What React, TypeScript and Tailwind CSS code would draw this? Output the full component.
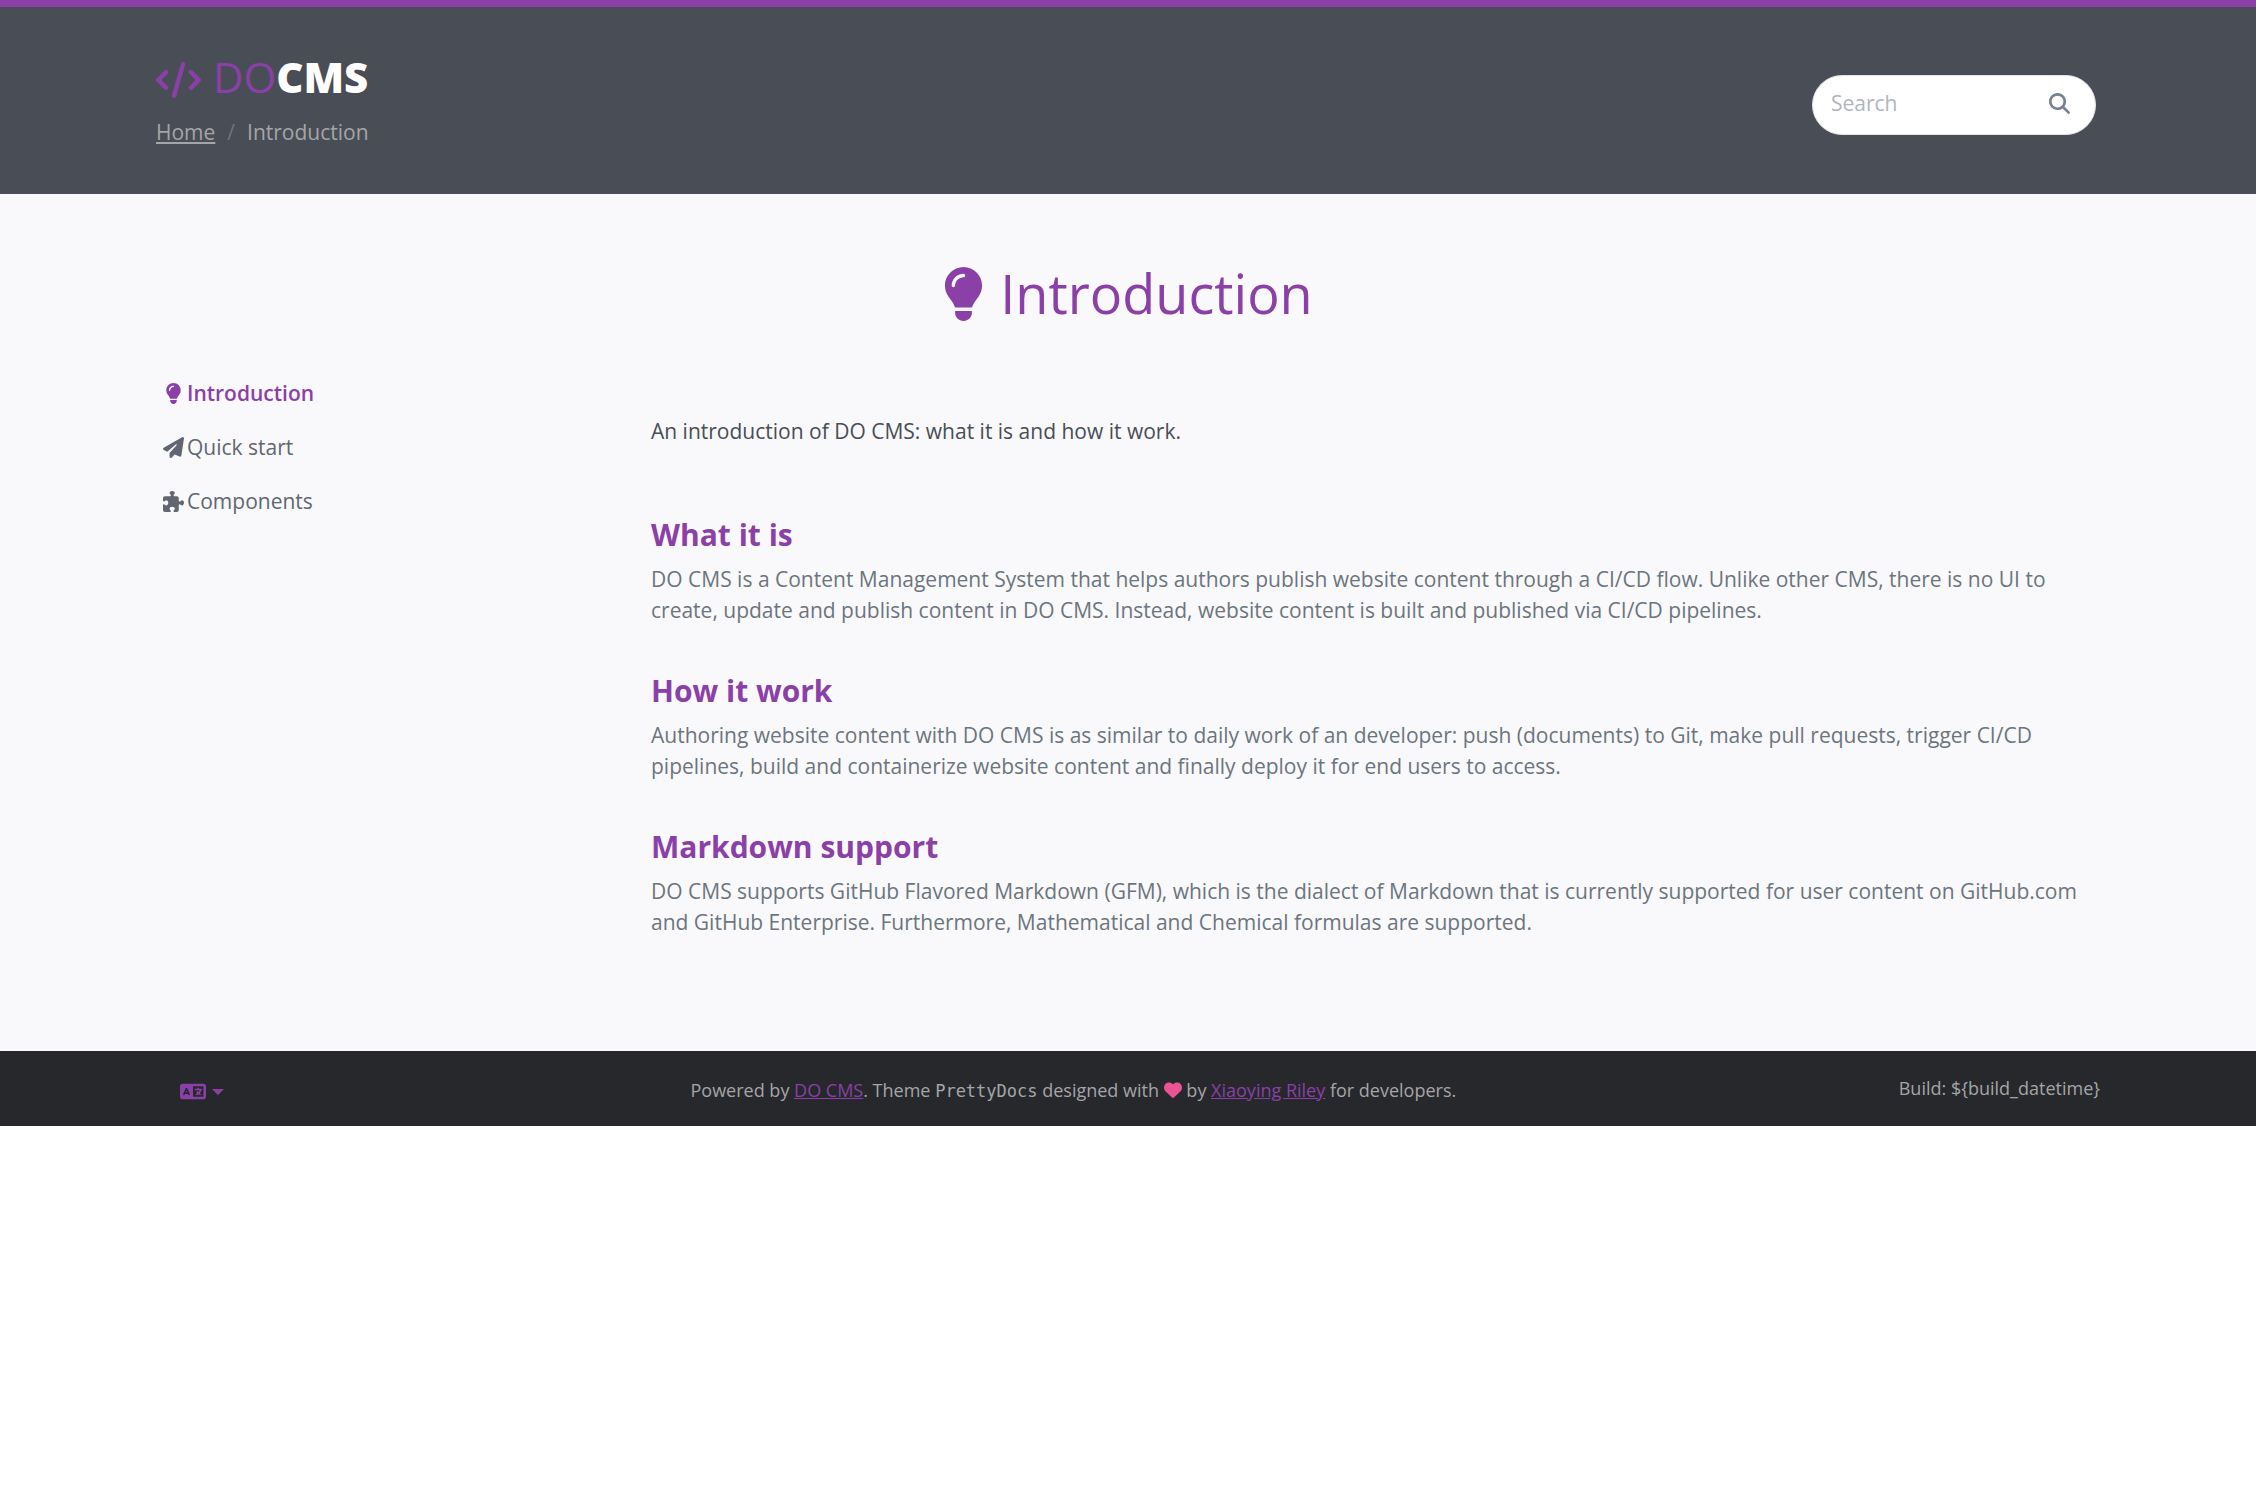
import {
  FaCode,
  FaHeart,
  FaLanguage,
  FaLightbulb,
  FaMagnifyingGlass,
  FaPaperPlane,
  FaPuzzlePiece,
} from "react-icons/fa6";

const links = [
  { label: "Introduction", Icon: FaLightbulb, active: true },
  { label: "Quick start", Icon: FaPaperPlane, active: false },
  { label: "Components", Icon: FaPuzzlePiece, active: false },
];

const sections = [
  {
    title: "What it is",
    text: "DO CMS is a Content Management System that helps authors publish website content through a CI/CD flow. Unlike other CMS, there is no UI to create, update and publish content in DO CMS. Instead, website content is built and published via CI/CD pipelines.",
  },
  {
    title: "How it work",
    text: "Authoring website content with DO CMS is as similar to daily work of an developer: push (documents) to Git, make pull requests, trigger CI/CD pipelines, build and containerize website content and finally deploy it for end users to access.",
  },
  {
    title: "Markdown support",
    text: "DO CMS supports GitHub Flavored Markdown (GFM), which is the dialect of Markdown that is currently supported for user content on GitHub.com and GitHub Enterprise. Furthermore, Mathematical and Chemical formulas are supported.",
  },
];

function Header() {
  return (
    <header className="border-t-[7px] border-[#8a40a7] bg-[#494d55]">
      <div className="mx-auto flex max-w-[1980px] items-start justify-between px-[18px] pt-[45px] pb-[46px]">
        <div>
          <a href="#" className="flex items-center text-[42px] leading-[50px] text-[#8a40a7]">
            <FaCode className="mt-1.5 mr-3 h-9 w-[45px]" />
            <span>DO</span>
            <span className="font-extrabold text-white">CMS</span>
          </a>
          <nav aria-label="Breadcrumb" className="mt-[15px]">
            <ol className="flex gap-3 text-[21px] leading-[31px] text-[#a5a5a7]">
              <li>
                <a href="#" className="underline">Home</a>
              </li>
              <li aria-hidden="true" className="text-[#6c757d]">/</li>
              <li aria-current="page">Introduction</li>
            </ol>
          </nav>
        </div>
        <form
          role="search"
          onSubmit={(e) => e.preventDefault()}
          className="mt-[23px] mr-1 flex h-[60px] w-[284px] items-center rounded-full border border-[#e2e3e6] bg-white pb-1 pl-[18px] pr-[25px]"
        >
          <input
            type="text"
            aria-label="Search"
            placeholder="Search"
            className="min-w-0 flex-1 bg-transparent text-[21px] leading-[31px] outline-none placeholder:text-[#b0b5be]"
          />
          <button type="submit" aria-label="Search" className="text-[#778090]">
            <FaMagnifyingGlass className="size-[21px]" />
          </button>
        </form>
      </div>
    </header>
  );
}

function Sidebar() {
  return (
    <nav aria-label="Documentation" className="w-1/4 shrink-0">
      <ul>
        {links.map(({ label, Icon, active }) => (
          <li key={label}>
            <a
              href="#"
              className={
                active
                  ? "flex h-[54px] items-center pl-[7px] font-semibold text-[#8a40a7]"
                  : "flex h-[54px] items-center pl-[7px] text-[#616670]"
              }
            >
              <span className="mr-[3px] flex w-[21px] justify-center">
                <Icon className="size-[21px]" />
              </span>
              {label}
            </a>
          </li>
        ))}
      </ul>
    </nav>
  );
}

function Footer() {
  return (
    <footer className="bg-[#26282c] text-[18px] leading-[27px] text-[#a5a5a7]">
      <div className="mx-auto flex h-[75px] max-w-[1980px] items-center justify-between px-[18px] pt-1">
        <button type="button" aria-label="Language" className="flex items-center gap-1.5 px-6 pt-0.5 text-[#8a40a7]">
          <FaLanguage className="h-[21px] w-[26px]" />
          <svg viewBox="0 0 12 6" className="h-1.5 w-3" fill="currentColor" aria-hidden="true">
            <path d="M0 0h12L6 6z" />
          </svg>
        </button>
        <p>
          Powered by <a href="#" className="text-[#8a40a7] underline">DO CMS</a>. Theme{" "}
          <code className="font-['DejaVu_Sans_Mono',monospace] text-[17px]">PrettyDocs</code> designed with{" "}
          <FaHeart className="inline size-[18px] align-[-2px] text-[#ea5395]" /> by{" "}
          <a href="#" className="text-[#8a40a7] underline">Xiaoying Riley</a> for developers.
        </p>
        <p className="pb-1">{"Build: ${build_datetime}"}</p>
      </div>
    </footer>
  );
}

export default function App() {
  return (
    <div className="font-['Open_Sans',sans-serif] text-[21px] leading-[31px]">
      <Header />
      <main className="bg-[#f9f9fb]">
        <div className="mx-auto max-w-[1980px] px-[18px] pt-[67px] pb-[113px]">
          <h1 className="flex items-center justify-center gap-4 text-[54px] leading-[65px] text-[#8a40a7]">
            <FaLightbulb className="h-[54px] w-[41px]" />
            Introduction
          </h1>
          <div className="mt-10 -mr-9 flex">
            <Sidebar />
            <div className="min-w-0 flex-1 pt-[50px] pr-9">
              <p className="text-[#494d55]">An introduction of DO CMS: what it is and how it work.</p>
              <div className="mt-[70px] flex flex-col gap-[47px]">
                {sections.map((s) => (
                  <section key={s.title}>
                    <h2 className="mb-[11px] text-[30px] leading-9 font-bold text-[#8a40a7]">{s.title}</h2>
                    <p className="text-[#6c757d]">{s.text}</p>
                  </section>
                ))}
              </div>
            </div>
          </div>
        </div>
      </main>
      <Footer />
    </div>
  );
}
